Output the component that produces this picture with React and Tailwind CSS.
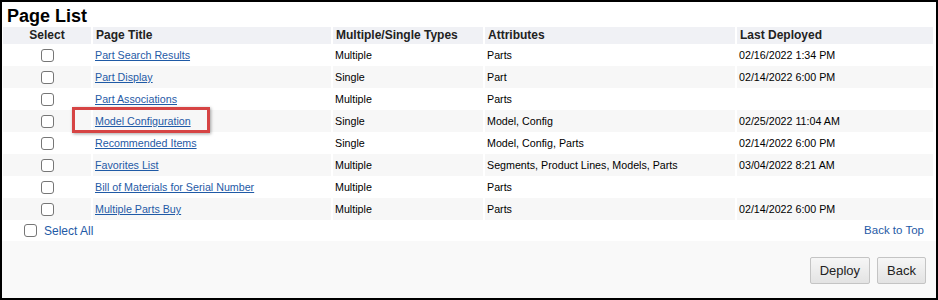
import React from 'react';

// rows of the page list
const pages = [
  { title: 'Part Search Results', type: 'Multiple', attrs: 'Parts', deployed: '02/16/2022 1:34 PM' },
  { title: 'Part Display', type: 'Single', attrs: 'Part', deployed: '02/14/2022 6:00 PM' },
  { title: 'Part Associations', type: 'Multiple', attrs: 'Parts', deployed: '' },
  { title: 'Model Configuration', type: 'Single', attrs: 'Model, Config', deployed: '02/25/2022 11:04 AM', marked: true },
  { title: 'Recommended Items', type: 'Single', attrs: 'Model, Config, Parts', deployed: '02/14/2022 6:00 PM' },
  { title: 'Favorites List', type: 'Multiple', attrs: 'Segments, Product Lines, Models, Parts', deployed: '03/04/2022 8:21 AM' },
  { title: 'Bill of Materials for Serial Number', type: 'Multiple', attrs: 'Parts', deployed: '' },
  { title: 'Multiple Parts Buy', type: 'Multiple', attrs: 'Parts', deployed: '02/14/2022 6:00 PM' },
];

function Box() {
  return (
    <span className="inline-block w-[13px] h-[13px] border border-[#767676] rounded-[3px] bg-white align-middle" />
  );
}

function Btn({ children }) {
  return (
    <button className="h-[27px] px-[9px] border border-[#c4c4c4] rounded-[2px] bg-gradient-to-b from-[#f6f6f6] to-[#e3e3e3] text-[13px] text-[#222]">
      {children}
    </button>
  );
}

export default function App() {
  return (
    <div
      className="w-[938px] h-[300px] border-2 border-black bg-white flex flex-col overflow-hidden"
      style={{ fontFamily: '"Liberation Sans", Arial, sans-serif' }}
    >
      <div className="h-[25px] pl-[5px] flex items-end">
        <h1 className="text-[18px] font-bold text-black leading-[22px]">Page List</h1>
      </div>

      <table className="table-fixed border-collapse w-[930px] ml-[1px]">
        <colgroup>
          <col className="w-[89px]" />
          <col className="w-[240px]" />
          <col className="w-[152px]" />
          <col className="w-[252px]" />
          <col className="w-[197px]" />
        </colgroup>
        <thead>
          <tr className="bg-[#f0f1f5] h-[17px] text-[12px] font-bold text-[#222] leading-[17px]">
            <th className="text-center font-bold">Select</th>
            <th className="text-left pl-[3px] border-l-2 border-white">Page Title</th>
            <th className="text-left pl-[3px] border-l-2 border-white">Multiple/Single Types</th>
            <th className="text-left pl-[3px] border-l-2 border-white">Attributes</th>
            <th className="text-left pl-[3px] border-l-2 border-white">Last Deployed</th>
          </tr>
        </thead>
        <tbody className="text-[10.7px] text-black">
          {pages.map((p, i) => (
            <tr key={p.title} className={`h-[22px] ${i % 2 === 1 ? 'bg-[#f7f7f7]' : 'bg-white'}`}>
              <td className="text-center leading-none"><Box /></td>
              <td className="pl-[2px] border-l-2 border-white">
                <span className="relative">
                  <a href="#" className="text-[#1f5aa6] underline">{p.title}</a>
                  {p.marked && (
                    <span className="absolute left-[-23px] top-[-8px] w-[138px] h-[26px] border-[3px] border-[#d64444] shadow-[1px_1px_3px_rgba(0,0,0,0.35)]" />
                  )}
                </span>
              </td>
              <td className="pl-[2px] border-l-2 border-white">{p.type}</td>
              <td className="pl-[2px] border-l-2 border-white">{p.attrs}</td>
              <td className="pl-[2px] border-l-2 border-white">{p.deployed}</td>
            </tr>
          ))}
        </tbody>
      </table>

      <div className="w-[930px] ml-[1px] h-[21px] flex items-center pl-[21px] pr-[9px] text-[12px] text-[#1f5aa6]">
        <Box />
        <span className="ml-[7px]">Select All</span>
        <a href="#" className="ml-auto text-[11.5px]">Back to Top</a>
      </div>

      <div className="flex-1 bg-[#f9f9f9] flex justify-end items-start pt-[16px] pr-[10px] gap-[7px]">
        <Btn>Deploy</Btn>
        <Btn>Back</Btn>
      </div>
    </div>
  );
}
